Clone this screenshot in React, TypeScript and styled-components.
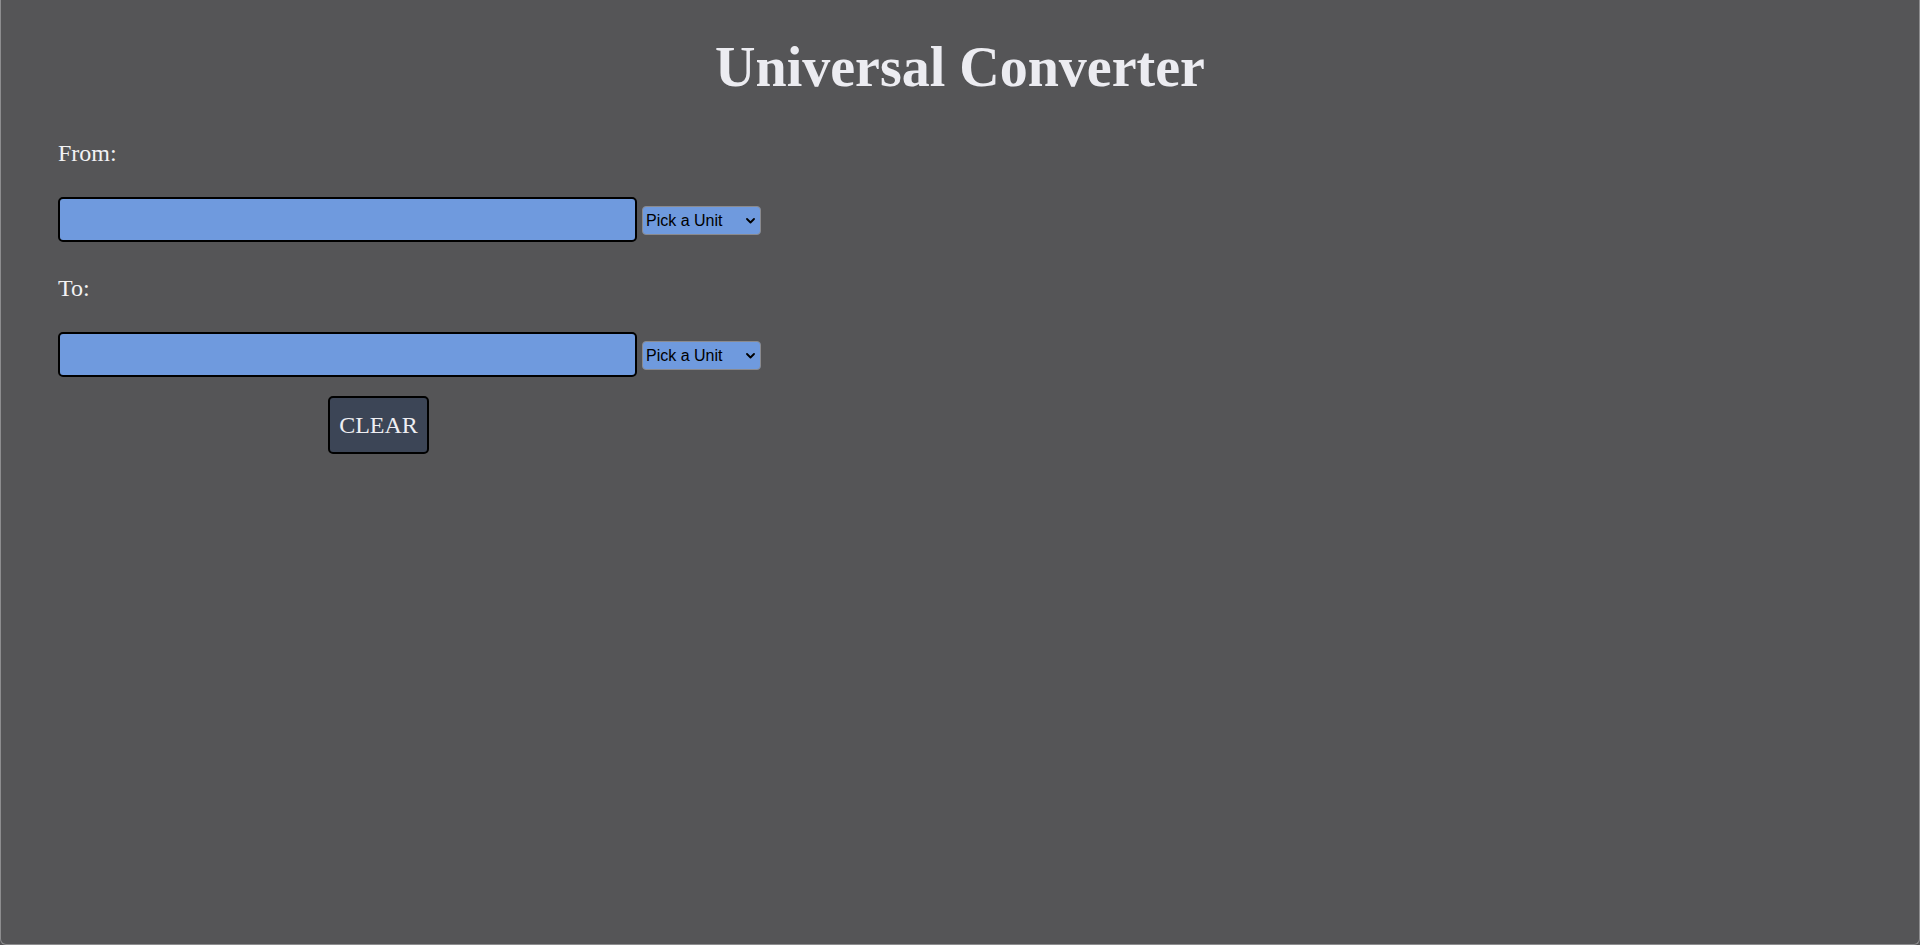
import React from "react";
import styled, { createGlobalStyle } from "styled-components";

const GlobalStyle = createGlobalStyle`
  html, body { margin: 0; padding: 0; }
  body { background: #555557; font-family: "Liberation Serif", "Times New Roman", serif; }
  * { box-sizing: border-box; }
`;

const Page = styled.div`
  min-height: 945px;
  background: #555557;
  border: 1px solid #8d8d8f;
  border-top: none;
  border-radius: 0 0 6px 6px;
  padding: 0 57px;
`;

const Title = styled.h1`
  margin: 0;
  padding-top: 35px;
  text-align: center;
  font-family: "Liberation Serif", "Times New Roman", serif;
  font-weight: 700;
  font-size: 56px;
  line-height: 64px;
  color: #ececf1;
`;

const Form = styled.form`
  display: flex;
  flex-direction: column;
  padding-top: 40px;
`;

const Label = styled.label`
  display: block;
  font-family: "Liberation Serif", "Times New Roman", serif;
  font-size: 24px;
  line-height: 28px;
  color: #f2f2f4;
  margin-bottom: 30px;
`;

const Row = styled.div`
  display: flex;
  align-items: flex-start;
  gap: 5px;
  margin-bottom: 32px;
`;

const ValueInput = styled.input`
  width: 579px;
  height: 45px;
  background: #6f9ade;
  border: 2px solid #000;
  border-radius: 5px;
  font-family: "Liberation Serif", "Times New Roman", serif;
  font-size: 22px;
  padding: 0 8px;
  outline: none;
`;

const SelectWrap = styled.div`
  position: relative;
  margin-top: 9px;
`;

const UnitSelect = styled.select`
  appearance: none;
  -webkit-appearance: none;
  width: 119px;
  height: 29px;
  background: #6f9ade;
  border: 1px solid #8a8a8e;
  border-radius: 4px;
  font-family: "Liberation Sans", Arial, sans-serif;
  font-size: 16px;
  color: #000;
  padding: 0 0 0 3px;
  outline: none;
`;

const Chevron = styled.svg`
  position: absolute;
  right: 6px;
  top: 12px;
  width: 9px;
  height: 6px;
  pointer-events: none;
`;

const ClearButton = styled.button`
  align-self: flex-start;
  margin-left: 270px;
  margin-top: -13px;
  width: 101px;
  height: 58px;
  background: #3c4556;
  border: 2px solid #000;
  border-radius: 5px;
  color: #eeeef2;
  font-family: "Liberation Serif", "Times New Roman", serif;
  font-size: 24px;
  padding: 0;
  cursor: pointer;
`;

const UnitPicker: React.FC = () => (
  <SelectWrap>
    <UnitSelect defaultValue="">
      <option value="">Pick a Unit</option>
      <option value="m">Meters</option>
      <option value="ft">Feet</option>
      <option value="kg">Kilograms</option>
      <option value="lb">Pounds</option>
    </UnitSelect>
    <Chevron viewBox="0 0 9 6">
      <path d="M1 1 L4.5 4.5 L8 1" fill="none" stroke="#000" strokeWidth="1.8" strokeLinecap="round" strokeLinejoin="round" />
    </Chevron>
  </SelectWrap>
);

export default function App() {
  return (
    <>
      <GlobalStyle />
      <Page>
        <Title>Universal Converter</Title>
        <Form onSubmit={(e) => e.preventDefault()}>
          <Label htmlFor="from">From:</Label>
          <Row>
            <ValueInput id="from" type="text" />
            <UnitPicker />
          </Row>
          <Label htmlFor="to">To:</Label>
          <Row>
            <ValueInput id="to" type="text" />
            <UnitPicker />
          </Row>
          <ClearButton type="reset">CLEAR</ClearButton>
        </Form>
      </Page>
    </>
  );
}
